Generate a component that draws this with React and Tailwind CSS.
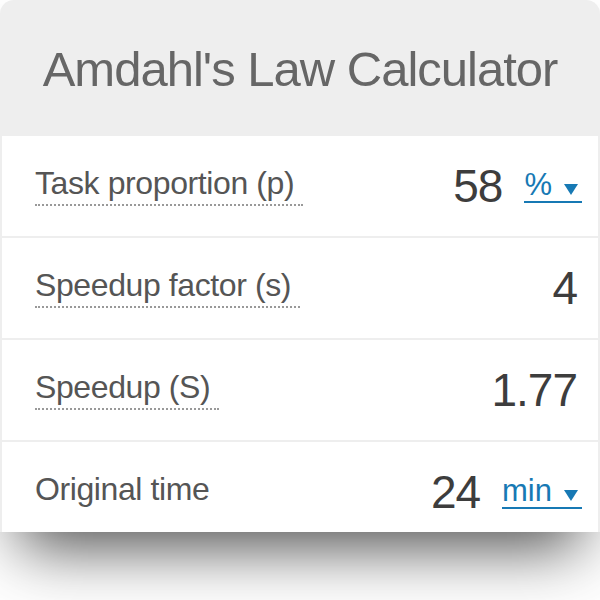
import React from "react";

function Label({ children, dotted = true }) {
  return (
    <span
      className={
        "text-[32px] leading-none tracking-[-0.4px] text-[#555] pb-[5px] pr-[9px] " +
        (dotted ? "border-b-2 border-dotted border-[#999]" : "border-b-2 border-transparent")
      }
    >
      {children}
    </span>
  );
}

function Unit({ children }) {
  return (
    <span className="ml-[22px] mb-[6px] flex items-end text-[#1779b4]">
      <span className="text-[31px] leading-none border-b-2 border-[#1779b4] pb-[1px]">
        {children}
      </span>
      <span className="w-[30px] h-[25px] border-b-2 border-[#1779b4] flex items-end justify-end pr-[4px] pb-[6px]">
        <svg width="14" height="11" viewBox="0 0 14 11">
          <polygon points="0,0 14,0 7,11" fill="#1779b4" />
        </svg>
      </span>
    </span>
  );
}

function Row({ label, dotted, value, unit, h = "h-[100px]" }) {
  return (
    <div className={"bg-white flex items-center justify-between pl-[33px] " + h + (unit ? " pr-[16px]" : " pr-[21px]")}>
      <Label dotted={dotted}>{label}</Label>
      <div className="flex items-end">
        <span className="text-[46px] leading-none tracking-[-1px] text-[#3d3d3d]">{value}</span>
        {unit && <Unit>{unit}</Unit>}
      </div>
    </div>
  );
}

export default function App() {
  return (
    <div
      className="w-[600px] h-[600px] bg-white overflow-hidden"
      style={{ fontFamily: '"Liberation Sans", Arial, sans-serif' }}
    >
      <div className="w-[600px] rounded-t-[14px] bg-[#eeeeee] px-[2px] shadow-[0_35px_60px_-20px_rgba(0,0,0,0.7)]">
        <div className="h-[136px] flex items-center justify-center pt-[2px]">
          <h1 className="text-[49px] leading-none text-[#666] tracking-[-1px]">
            Amdahl's Law Calculator
          </h1>
        </div>
        <div className="flex flex-col gap-[2px]">
          <Row label="Task proportion (p)" value="58" unit="%" />
          <Row label="Speedup factor (s)" value="4" />
          <Row label="Speedup (S)" value="1.77" />
          <Row label="Original time" dotted={false} value="24" unit="min" h="h-[90px] pt-[10px]" />
        </div>
      </div>
    </div>
  );
}
